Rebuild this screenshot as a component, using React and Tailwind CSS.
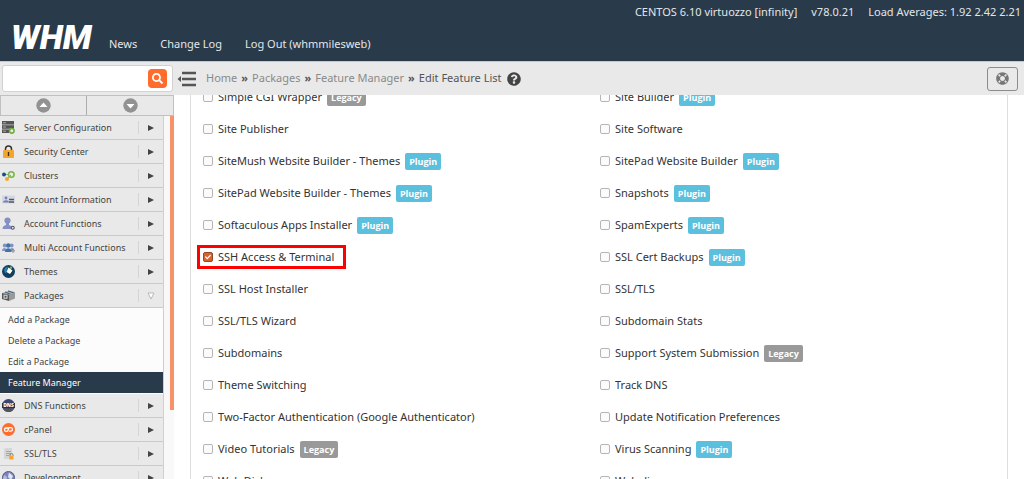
import { useState } from 'react';
import { FaSearch, FaQuestionCircle, FaLifeRing, FaCheck } from 'react-icons/fa';

function ServerIcon() {
    return (
        <svg viewBox="0 0 13 13" className="size-[13px]">
            <rect x="0" y="0" width="12" height="3.6" fill="#555" />
            <rect x="0" y="4.2" width="12" height="3.6" fill="#555" />
            <rect x="0" y="8.4" width="7" height="3.6" fill="#555" />
            <path d="M1 1.8h3M1 6h3M1 10.2h3" stroke="#aaa" strokeWidth="1" />
            <circle cx="9.8" cy="9.8" r="2.3" fill="#e8e8e8" stroke="#6fae3c" strokeWidth="1.6" />
        </svg>
    );
}

function LockIcon() {
    return (
        <svg viewBox="0 0 13 13" className="size-[13px]">
            <path d="M3.5 6V4a3 3 0 0 1 6 0v2" fill="none" stroke="#333" strokeWidth="1.5" />
            <rect x="1" y="5" width="11" height="8" rx="1" fill="#f5a52c" />
            <rect x="5.8" y="7" width="1.4" height="4" fill="#333" />
        </svg>
    );
}

function ClustersIcon() {
    return (
        <svg viewBox="0 0 13 13" className="size-[13px]">
            <path d="M2 5.5h4M9 6L5 10" stroke="#8aa" strokeWidth="1" />
            <circle cx="2" cy="5.5" r="2" fill="#1f4f82" />
            <circle cx="9.3" cy="5.5" r="2.8" fill="none" stroke="#7ab648" strokeWidth="1.6" />
            <circle cx="5" cy="10" r="2" fill="#f5a52c" />
        </svg>
    );
}

function AccountInfoIcon() {
    return (
        <svg viewBox="0 0 13 13" className="size-[13px]">
            <rect x="0" y="2.5" width="13" height="8" fill="#d5d8e2" />
            <circle cx="4" cy="5" r="1.4" fill="#7181b5" />
            <path d="M1 9.5c0-3 6-3 6 0z" fill="#7181b5" />
            <path d="M7 6.5h5M7 9h5" stroke="#555" strokeWidth="1.3" />
        </svg>
    );
}

function AccountFunctionsIcon() {
    return (
        <svg viewBox="0 0 13 13" className="size-[13px]">
            <circle cx="5.5" cy="3.5" r="3.1" fill="#8591c4" />
            <path d="M0.5 12c0-2.6 1.7-3.5 3.5-4V6h3v2c1.7.5 3 1.2 3 4z" fill="#8591c4" />
            <circle cx="10.7" cy="10.7" r="1.5" fill="#e8e8e8" stroke="#555" strokeWidth="1.1" />
        </svg>
    );
}

function MultiAccountIcon() {
    return (
        <svg viewBox="0 0 13 13" className="size-[13px]">
            <circle cx="2.7" cy="4.5" r="1.9" fill="#8591c4" />
            <circle cx="9.7" cy="4.5" r="1.9" fill="#8591c4" />
            <path d="M0 10c0-4 5-4 5 0zM7.5 10c0-4 5-4 5 0z" fill="#8591c4" />
            <circle cx="6.2" cy="4.5" r="2.2" fill="#3c76a6" />
            <path d="M3 11c0-5 6.5-5 6.5 0z" fill="#3c76a6" />
            <circle cx="11" cy="10" r="1.2" fill="#ddd" stroke="#777" strokeWidth="0.8" />
        </svg>
    );
}

function ThemesIcon() {
    return (
        <svg viewBox="0 0 13 13" className="size-[13px]">
            <circle cx="6.5" cy="6.5" r="6.5" fill="#123f5f" />
            <path d="M2 5a5 5 0 0 1 4-3.5L4 8.5A5 5 0 0 1 2 5z" fill="#2b7fb0" />
            <path d="M6.5 2.5l4 3-2.500 3.500-3.500-2z" fill="#fff" />
            <circle cx="9" cy="2.8" r="1.2" fill="#7ab648" />
        </svg>
    );
}

function PackagesIcon() {
    return (
        <svg viewBox="0 0 13 13" className="size-[13px]">
            <path d="M0 4l7-2.500 6 1.500-6 2.500z" fill="#b5bac0" />
            <path d="M3 3l6 2.500M6 2l6 2" stroke="#3f6480" strokeWidth="1.2" />
            <path d="M0 4l7 1.500V12L0 10z" fill="#555" />
            <path d="M7 5.500L13 3v6.500L7 12z" fill="#999" />
            <rect x="2" y="6.2" width="3" height="3" fill="none" stroke="#ddd" strokeWidth="1" />
        </svg>
    );
}

function DnsIcon() {
    return (
        <svg viewBox="0 0 13 13" className="size-[13px]">
            <circle cx="6.5" cy="6.5" r="6.5" fill="#3b4570" />
            <path d="M0.7 9.500a6.500 6.500 0 0 0 11.600 0z" fill="#555" />
            <rect x="0" y="4" width="13" height="5" fill="#2b3040" />
            <text x="6.5" y="8.4" textAnchor="middle" fontFamily="Open Sans" fontSize="5" fontWeight="800" fill="#fff">DNS</text>
        </svg>
    );
}

function CpanelIcon() {
    return (
        <svg viewBox="0 0 13 13" className="size-[13px]">
            <circle cx="6.5" cy="6.5" r="6.5" fill="#ff6c2c" />
            <path d="M6 5H4.200a1.700 1.700 0 0 0 0 3.400H5.400L7 4.700h1.700a1.700 1.700 0 0 1 0 3.400H7.400" fill="none" stroke="#fff" strokeWidth="1.3" strokeLinecap="round" strokeLinejoin="round" />
        </svg>
    );
}

function SslIcon() {
    return (
        <svg viewBox="0 0 13 13" className="size-[13px]">
            <path d="M2 2l2-1h6v11H2z" fill="#d6d6d6" />
            <path d="M4 4.500h5M4 6.500h5M4 8.500h3" stroke="#a5a5a5" strokeWidth="1" />
            <path d="M8 9V8a1.500 1.500 0 0 1 3 0v1" fill="none" stroke="#777" strokeWidth="0.9" />
            <rect x="7.3" y="9" width="4.2" height="3.5" fill="#f5a52c" />
        </svg>
    );
}

function DevelopmentIcon() {
    return (
        <svg viewBox="0 0 13 13" className="size-[13px]">
            <circle cx="6.5" cy="6.5" r="6" fill="#7d86bb" stroke="#525b80" strokeWidth="1" />
            <path d="M7 1.500l4 3.500-2 4-3-3z" fill="#dfe3f2" />
            <path d="M2 4l3 2-1 4-3-2z" fill="#b5bde0" />
        </svg>
    );
}

const menu = [
    { name: 'Server Configuration', Icon: ServerIcon },
    { name: 'Security Center', Icon: LockIcon },
    { name: 'Clusters', Icon: ClustersIcon },
    { name: 'Account Information', Icon: AccountInfoIcon },
    { name: 'Account Functions', Icon: AccountFunctionsIcon },
    { name: 'Multi Account Functions', Icon: MultiAccountIcon },
    { name: 'Themes', Icon: ThemesIcon },
    {
        name: 'Packages',
        Icon: PackagesIcon,
        children: ['Add a Package', 'Delete a Package', 'Edit a Package', 'Feature Manager'],
    },
    { name: 'DNS Functions', Icon: DnsIcon },
    { name: 'cPanel', Icon: CpanelIcon },
    { name: 'SSL/TLS', Icon: SslIcon },
    { name: 'Development', Icon: DevelopmentIcon },
];

// Listed row by row: left column, right column
const features = [
    { name: 'Simple CGI Wrapper', tag: 'Legacy' },
    { name: 'Site Builder', tag: 'Plugin' },
    { name: 'Site Publisher' },
    { name: 'Site Software' },
    { name: 'SiteMush Website Builder - Themes', tag: 'Plugin' },
    { name: 'SitePad Website Builder', tag: 'Plugin' },
    { name: 'SitePad Website Builder - Themes', tag: 'Plugin' },
    { name: 'Snapshots', tag: 'Plugin' },
    { name: 'Softaculous Apps Installer', tag: 'Plugin' },
    { name: 'SpamExperts', tag: 'Plugin' },
    { name: 'SSH Access & Terminal', highlighted: true },
    { name: 'SSL Cert Backups', tag: 'Plugin' },
    { name: 'SSL Host Installer' },
    { name: 'SSL/TLS' },
    { name: 'SSL/TLS Wizard' },
    { name: 'Subdomain Stats' },
    { name: 'Subdomains' },
    { name: 'Support System Submission', tag: 'Legacy' },
    { name: 'Theme Switching' },
    { name: 'Track DNS' },
    { name: 'Two-Factor Authentication (Google Authenticator)' },
    { name: 'Update Notification Preferences' },
    { name: 'Video Tutorials', tag: 'Legacy' },
    { name: 'Virus Scanning', tag: 'Plugin' },
    { name: 'Web Disk' },
    { name: 'Webalizer' },
];

function Header() {
    return (
        <header className="shrink-0 bg-[#293a4a] text-[11px] text-[#e3e6e9]">
            <div className="flex h-6 items-center justify-end gap-[14px] pr-[3px]">
                <span>CENTOS 6.10 virtuozzo [infinity]</span>
                <span>v78.0.21</span>
                <span>Load Averages: 1.92 2.42 2.21</span>
            </div>
            <div className="flex h-[37px] items-start pl-[11px]">
                <a href="#home" className="w-[98px] font-['Roboto'] text-[34px] leading-[26px] font-black text-white italic">WHM</a>
                <nav className="flex gap-[23px] pt-3 leading-4">
                    <a href="#news">News</a>
                    <a href="#changelog">Change Log</a>
                    <a href="#logout">Log Out (whmmilesweb)</a>
                </nav>
            </div>
        </header>
    );
}

function Toolbar() {
    return (
        <div className="flex h-[34px] shrink-0 items-center border-t border-[#c4c6c8] bg-[#e9e9e9]">
            <form className="ml-[2px] flex h-[27px] w-[171px] items-center rounded-[3px] border border-[#d2d2d2] bg-white pr-[5px]">
                <input type="text" aria-label="Search" className="h-full min-w-0 flex-1 px-2 text-[11px] outline-none" />
                <button type="button" aria-label="Search" className="flex size-[19px] items-center justify-center rounded-[4px] bg-[#ff6c2c] text-white">
                    <FaSearch className="size-[11px]" />
                </button>
            </form>
            <button type="button" aria-label="Collapse menu" className="ml-1 text-[#555]">
                <svg viewBox="0 0 20 16" className="h-4 w-5">
                    <path d="M5 2h14M5 8h14M5 14h14" stroke="currentColor" strokeWidth="2.4" />
                    <path d="M4 5v6L0.5 8z" fill="currentColor" />
                </svg>
            </button>
            <nav className="flex items-center gap-1 pl-[9px] text-[11px] text-[#8a8a8a]" aria-label="Breadcrumb">
                <a href="#home">Home</a>
                <span className="font-bold text-[#555]">»</span>
                <a href="#packages">Packages</a>
                <span className="font-bold text-[#555]">»</span>
                <a href="#features">Feature Manager</a>
                <span className="font-bold text-[#555]">»</span>
                <span className="text-[#555]">Edit Feature List</span>
                <FaQuestionCircle className="ml-px size-[14px] text-[#444]" />
            </nav>
            <button type="button" aria-label="Support" className="mr-[6px] ml-auto flex h-6 w-[31px] items-center justify-center rounded-[3px] border border-[#8c8c8c] text-[#777]">
                <FaLifeRing className="size-[13px]" />
            </button>
        </div>
    );
}

function Sidebar() {
    return (
        <aside className="flex w-[174px] shrink-0 flex-col">
            <div className="grid h-[21px] shrink-0 grid-cols-2 divide-x divide-[#ababab] border border-[#c0c0c0] bg-[#e9e9e9]">
                <button type="button" aria-label="Collapse all" className="flex items-center justify-center">
                    <svg viewBox="0 0 15 15" className="size-[15px]">
                        <circle cx="7.5" cy="7.5" r="7.2" fill="#929292" />
                        <path d="M7.5 4.500l4 4.500h-8z" fill="#fff" />
                    </svg>
                </button>
                <button type="button" aria-label="Expand all" className="flex items-center justify-center">
                    <svg viewBox="0 0 15 15" className="size-[15px]">
                        <circle cx="7.5" cy="7.5" r="7.2" fill="#929292" />
                        <path d="M7.5 10.500l4-4.500h-8z" fill="#fff" />
                    </svg>
                </button>
            </div>
            <div className="flex min-h-0 flex-1">
                <ul className="w-[164px] overflow-hidden border-r border-[#cfcfcf] text-[9px] text-[#444]">
                    {menu.map(({ name, Icon, children }) => (
                        <li key={name}>
                            <button type="button" aria-expanded={Boolean(children)} className="flex h-6 w-full items-center border-b border-[#cacaca] bg-[#e9e9e9] pl-[2px] text-left">
                                <Icon />
                                <span className="flex-1 pl-[9px] whitespace-nowrap">{name}</span>
                                <span className="flex h-[13px] w-[25px] items-center justify-center border-l border-[#d5d5d5]">
                                    {children ? (
                                        <svg viewBox="0 0 8 8" className="size-2">
                                            <path d="M1 1h6L4 7z" fill="#fff" stroke="#aaa" strokeWidth="0.8" />
                                        </svg>
                                    ) : (
                                        <svg viewBox="0 0 8 8" className="size-2">
                                            <path d="M1 1l6 3-6 3z" fill="#444" />
                                        </svg>
                                    )}
                                </span>
                            </button>
                            {children && (
                                <ul className="bg-[#fcfcfc] pt-px pb-px">
                                    {children.map((child) => (
                                        <li key={child}>
                                            <a
                                                href="#package"
                                                className={`flex h-[21px] items-center pl-2 ${
                                                    child === 'Feature Manager' ? 'bg-[#293a4a] text-white' : ''
                                                }`}
                                            >
                                                {child}
                                            </a>
                                        </li>
                                    ))}
                                </ul>
                            )}
                        </li>
                    ))}
                </ul>
                <div className="flex flex-1 justify-end bg-[#f8f8f8]">
                    <div className="h-[81%] w-1 bg-[#f6916a]"></div>
                </div>
            </div>
        </aside>
    );
}

function Feature({ name, tag, highlighted }) {
    const [checked, setChecked] = useState(Boolean(highlighted));

    return (
        <div className="flex h-8 items-center">
            <label className="relative flex items-center gap-[5px]">
                <span className="relative flex">
                    <input
                        type="checkbox"
                        checked={checked}
                        onChange={(e) => setChecked(e.target.checked)}
                        className="size-[10px] appearance-none rounded-[2px] border border-[#b5b5b5] bg-[#fbfbfb] checked:border-[#8f4a2c] checked:bg-[#d9602f]"
                    />
                    {checked && <FaCheck className="pointer-events-none absolute inset-[2px] size-[6px] text-white" />}
                </span>
                <span>{name}</span>
                {highlighted && <span className="pointer-events-none absolute -inset-y-1 -right-3 -left-[6px] border-3 border-[#ff0000]"></span>}
            </label>
            {tag && (
                <span
                    className={`ml-[5px] rounded-[2px] px-1 font-['Open_Sans'] text-[9px] leading-[17px] font-bold text-white ${
                        tag === 'Plugin' ? 'bg-[#5bc0de]' : 'bg-[#999]'
                    }`}
                >
                    {tag}
                </span>
            )}
        </div>
    );
}

export default function App() {
    return (
        <div className="flex h-screen flex-col overflow-hidden bg-white font-['Noto_Sans',sans-serif]">
            <Header />
            <Toolbar />
            <div className="flex min-h-0 flex-1">
                <Sidebar />
                <main className="flex-1 overflow-hidden pr-4 pl-4">
                    <div className="-mt-[14px] grid grid-cols-2 border-x border-[#dedede] pr-[10px] pl-3 text-[11px] text-[#333]">
                        {features.map((feature) => (
                            <Feature key={feature.name} {...feature} />
                        ))}
                    </div>
                </main>
            </div>
        </div>
    );
}
